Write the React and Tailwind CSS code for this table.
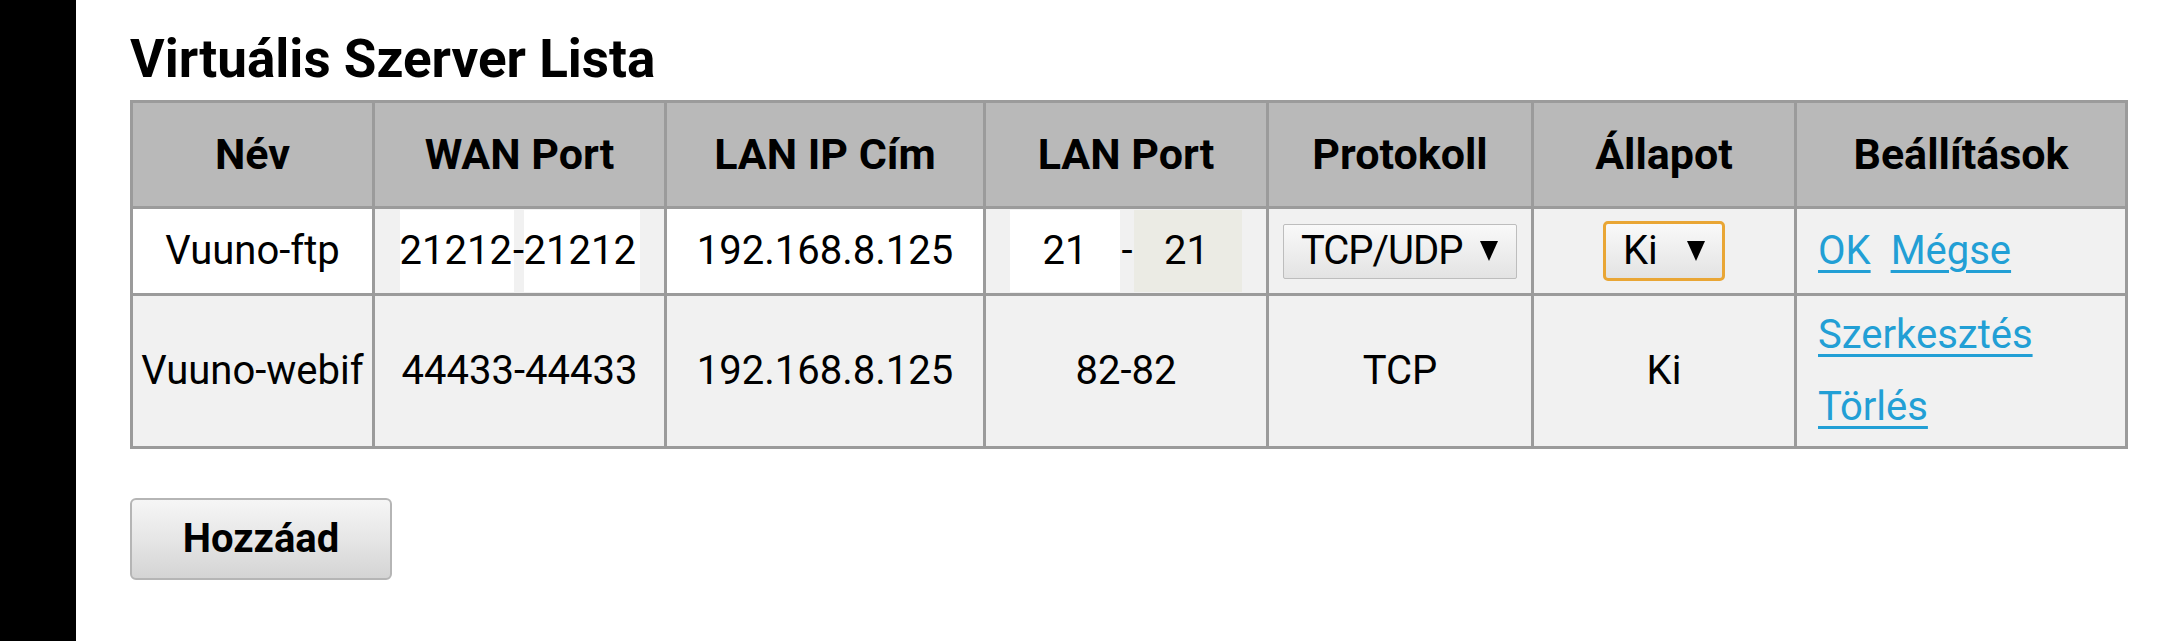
import React from "react";

const Arrow = () => (
  <svg width="18" height="20" viewBox="0 0 18 20" className="shrink-0">
    <polygon points="0,0 18,0 9,20" fill="#000" />
  </svg>
);

const headers = [
  { label: "Név", w: "w-[245px] border-l-[3px]" },
  { label: "WAN Port", w: "w-[292px]" },
  { label: "LAN IP Cím", w: "w-[319px]" },
  { label: "LAN Port", w: "w-[283px]" },
  { label: "Protokoll", w: "w-[265px]" },
  { label: "Állapot", w: "w-[263px]" },
  { label: "Beállítások", w: "w-[331px]" },
];

const cell = "border-r-[3px] border-b-[3px] border-[#9b9b9b] p-0 align-middle";
const link = "text-[#229fd5] underline decoration-[3px] underline-offset-[6px]";

const App = () => {
  return (
    <div className="flex h-screen bg-white font-['Roboto',sans-serif] text-black">
      {/* left edge */}
      <div className="w-[76px] shrink-0 bg-black" />

      <div className="pl-[54px] pt-[33px]">
        <h1 className="text-[53px] font-bold leading-none">Virtuális Szerver Lista</h1>

        {/* server table */}
        <table className="mt-[14px] table-fixed border-separate border-spacing-0 w-[1998px] text-[40px]">
          <thead>
            <tr>
              {headers.map((h) => (
                <th
                  key={h.label}
                  className={`${h.w} h-[109px] border-t-[3px] border-r-[3px] border-b-[3px] border-[#9b9b9b] bg-[#b9b9b9] text-[43px] font-bold text-center align-middle p-0`}
                >
                  {h.label}
                </th>
              ))}
            </tr>
          </thead>
          <tbody>
            <tr className="h-[87px]">
              <td className={`${cell} border-l-[3px] bg-white text-center`}>Vuuno-ftp</td>
              <td className={`${cell} bg-[#f1f1f1]`}>
                <div className="flex items-center justify-center">
                  <div className="w-[114px] h-[82px] bg-white flex items-center">21212</div>
                  <div className="w-[10px] flex justify-center">-</div>
                  <div className="w-[116px] h-[82px] bg-white flex items-center">21212</div>
                </div>
              </td>
              <td className={`${cell} bg-white text-center`}>192.168.8.125</td>
              <td className={`${cell} bg-[#f1f1f1]`}>
                <div className="flex items-center justify-center">
                  <div className="w-[110px] h-[82px] bg-white flex items-center justify-center">21</div>
                  <div className="w-[14px] flex justify-center">-</div>
                  <div className="w-[108px] h-[82px] bg-[#ebebe4] flex items-center pl-[30px]">21</div>
                </div>
              </td>
              <td className={`${cell} bg-[#f1f1f1]`}>
                <div className="mx-auto w-[234px] h-[55px] flex items-center justify-between pl-[17px] pr-[18px] border border-[#bdbdbd] rounded-[2px] bg-linear-to-b from-[#f9f9f9] to-[#e3e3e3]">
                  <span className="tracking-[-1px]">TCP/UDP</span>
                  <Arrow />
                </div>
              </td>
              <td className={`${cell} bg-[#f1f1f1]`}>
                <div className="mx-auto w-[122px] h-[60px] flex items-center justify-between pl-[17px] pr-[17px] border-[3px] border-[#e9a635] rounded-[5px] bg-linear-to-b from-[#f9f9f9] to-[#e3e3e3]">
                  <span>Ki</span>
                  <Arrow />
                </div>
              </td>
              <td className={`${cell} bg-[#f1f1f1] pl-[21px]`}>
                <div className="flex gap-[20px]">
                  <a href="#" className={link}>OK</a>
                  <a href="#" className={link}>Mégse</a>
                </div>
              </td>
            </tr>
            <tr className="h-[153px] bg-[#f1f1f1] text-center">
              <td className={`${cell} border-l-[3px]`}>Vuuno-webif</td>
              <td className={cell}>44433-44433</td>
              <td className={cell}>192.168.8.125</td>
              <td className={cell}>82-82</td>
              <td className={cell}>TCP</td>
              <td className={cell}>Ki</td>
              <td className={`${cell} pl-[21px] text-left`}>
                <a href="#" className={`${link} block leading-[72px] w-fit`}>Szerkesztés</a>
                <a href="#" className={`${link} block leading-[72px] w-fit`}>Törlés</a>
              </td>
            </tr>
          </tbody>
        </table>

        <button className="mt-[49px] w-[262px] h-[82px] rounded-[6px] border-2 border-[#b5b5b5] bg-linear-to-b from-[#f6f6f6] via-[#e6e6e6] to-[#d4d4d4] text-[40px] font-bold">
          Hozzáad
        </button>
      </div>
    </div>
  );
};

export default App;
